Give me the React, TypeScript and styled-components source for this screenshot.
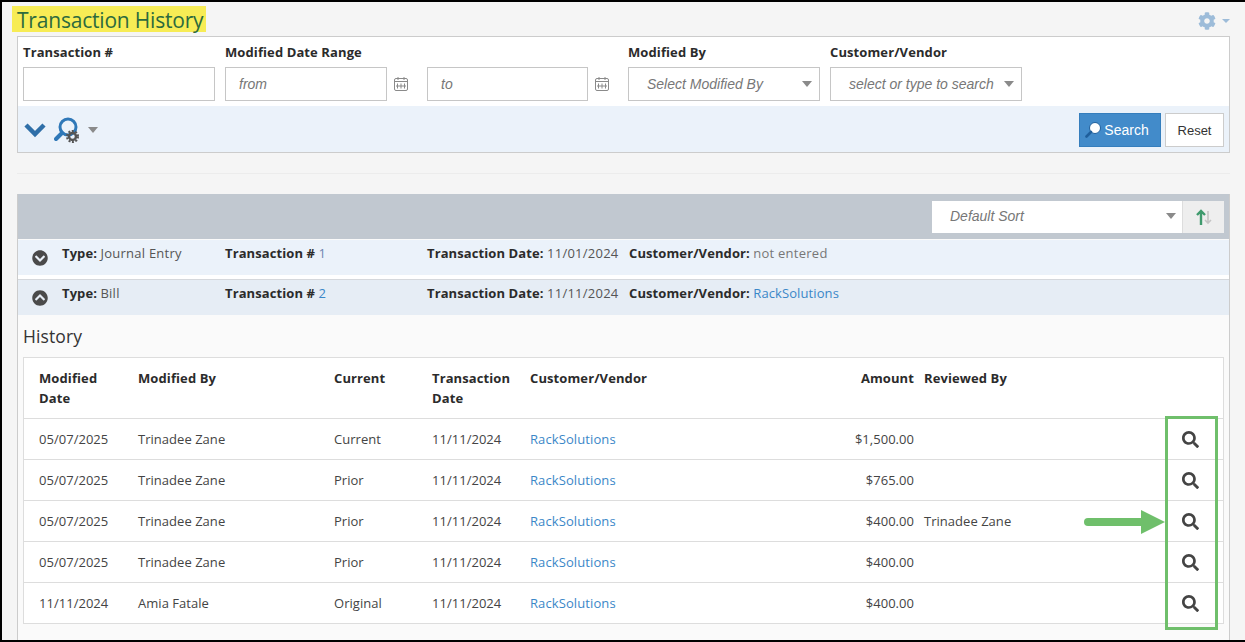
import styled, { createGlobalStyle } from 'styled-components';
import { FaCog, FaSearch, FaChevronCircleDown, FaChevronCircleUp } from 'react-icons/fa';

const Global = createGlobalStyle`
  html, body { margin: 0; padding: 0; background: #f5f5f5; }
  * { box-sizing: border-box; }
  body { font-family: "Open Sans", "Liberation Sans", sans-serif; font-size: 13px; color: #333; }
`;

const Frame = styled.div`
  position: relative;
  width: 1245px;
  height: 642px;
  overflow: hidden;
  background: #f5f5f5;
  border-top: 2px solid #000;
  border-left: 2px solid #000;
  border-bottom: 2px solid #000;
  padding-left: 15px;
`;

const TitleRow = styled.div`
  width: 1213px;
  height: 34px;
  display: flex;
  justify-content: space-between;
  align-items: flex-start;
`;

const Title = styled.h1`
  margin: 4px 0 0 -5px;
  width: 194px;
  height: 26px;
  padding: 0 0 0 5px;
  background: #f7ec55;
  color: #2c6a3e;
  font-size: 21px;
  font-weight: 400;
  line-height: 29px;
  letter-spacing: -0.2px;
  white-space: nowrap;
`;

const Settings = styled.div`
  display: flex;
  align-items: center;
  gap: 6px;
  margin-top: 10px;
  color: #9dbcd9;
  font-size: 18px;
  line-height: 18px;
`;

const Caret = styled.span<{ $w?: number; $color?: string }>`
  display: inline-block;
  width: 0;
  height: 0;
  border-left: ${p => (p.$w ?? 11) / 2}px solid transparent;
  border-right: ${p => (p.$w ?? 11) / 2}px solid transparent;
  border-top: ${p => ((p.$w ?? 11) * 6) / 11}px solid ${p => p.$color ?? '#8a8a8a'};
`;

const Panel = styled.section`
  width: 1213px;
  height: 117px;
  background: #fff;
  border: 1px solid #ccc;
`;

const Fields = styled.div`
  height: 69px;
  display: flex;
  padding-left: 5px;
`;

const Field = styled.div<{ $w: number }>`
  width: ${p => p.$w}px;
  flex: none;
`;

const Label = styled.div`
  height: 30px;
  padding-top: 6px;
  font-size: 13px;
  line-height: 18px;
  font-weight: 700;
  color: #2b2b2b;
  letter-spacing: 0.1px;
  white-space: nowrap;
`;

const DateRow = styled.div`
  display: flex;
  align-items: center;
`;

const Input = styled.div<{ $w: number; $select?: boolean }>`
  width: ${p => p.$w}px;
  height: 34px;
  flex: none;
  display: flex;
  align-items: center;
  justify-content: space-between;
  padding: 0 7px 0 ${p => (p.$select ? 18 : 13)}px;
  background: #fff;
  border: 1px solid #c6c6c6;
  font-family: "Liberation Sans", Arial, sans-serif;
  font-style: italic;
  font-size: 14px;
  color: #777;
  white-space: nowrap;
`;

const CalendarWrap = styled.span`
  display: flex;
  width: 40px;
  padding-left: 6px;
  color: #8a8a8a;
`;

const ActionBar = styled.div`
  height: 46px;
  background: #ebf2fa;
  display: flex;
  justify-content: space-between;
  padding: 7px 5px 0 6px;
`;

const ActionIcons = styled.div`
  display: flex;
  align-items: center;
  height: 34px;
  gap: 8px;
`;

const Buttons = styled.div`
  display: flex;
  gap: 4px;
`;

const SearchButton = styled.button`
  width: 82px;
  height: 34px;
  display: flex;
  align-items: center;
  justify-content: center;
  gap: 3px;
  padding: 0 6px 0 0;
  background: #428bca;
  border: 1px solid #357ebd;
  color: #fff;
  font-family: "Liberation Sans", Arial, sans-serif;
  font-size: 14px;
`;

const ResetButton = styled.button`
  width: 59px;
  height: 34px;
  padding: 0;
  background: #fff;
  border: 1px solid #ccc;
  color: #333;
  font-family: "Liberation Sans", Arial, sans-serif;
  font-size: 13px;
`;

const Rule = styled.hr`
  width: 1213px;
  height: 1px;
  margin: 20px 0;
  border: 0;
  background: #ececec;
`;

const Results = styled.section`
  width: 1213px;
  height: 460px;
  background: #fafafa;
  border-left: 1px solid #ccc;
  border-right: 1px solid #ccc;
`;

const SortBar = styled.div`
  height: 45px;
  background: #c1c8d0;
  display: flex;
  justify-content: flex-end;
  padding: 7px 5px 0 0;
`;

const SortSelect = styled.div`
  width: 250px;
  height: 32px;
  display: flex;
  align-items: center;
  justify-content: space-between;
  padding: 0 6px 2px 18px;
  background: #fff;
  font-family: "Liberation Sans", Arial, sans-serif;
  font-style: italic;
  font-size: 14px;
  color: #777;
`;

const SortToggle = styled.div`
  width: 42px;
  height: 32px;
  display: flex;
  align-items: center;
  justify-content: center;
  background: #eee;
  border-left: 1px solid #ddd;
`;

const TxRow = styled.div<{ $open?: boolean }>`
  height: 35px;
  margin-top: ${p => (p.$open ? 0 : 1)}px;
  display: grid;
  grid-template-columns: 44px 163px 202px 202px 1fr;
  padding-top: 3px;
  background: ${p => (p.$open ? '#e6edf5' : '#ebf2fa')};
  line-height: 20px;
  white-space: nowrap;
`;

const TxDivider = styled.div`
  height: 5px;
  border-bottom: 1px solid #d5d8dc;
  background: #fff;
`;

const TxToggle = styled.span`
  display: flex;
  padding: 7px 0 0 14px;
  color: #4a4a4a;
  font-size: 16px;
`;

const TxLabel = styled.b`
  font-weight: 700;
  color: #2b2b2b;
  letter-spacing: 0.1px;
`;

const Muted = styled.span<{ $tone?: string }>`
  color: ${p => p.$tone ?? '#555'};
  letter-spacing: 0.25px;
`;

const Link = styled.a`
  color: #3b87c8;
  text-decoration: none;
  letter-spacing: 0.1px;
`;

const Heading = styled.h2`
  margin: 0;
  height: 42px;
  padding: 11px 0 0 5px;
  font-size: 17.5px;
  font-weight: 400;
  line-height: 20px;
  color: #333;
  letter-spacing: 0.1px;
`;

const TableBox = styled.div`
  width: 1201px;
  margin-left: 5px;
  background: #fff;
  border: 1px solid #ddd;
`;

const HistoryTable = styled.table`
  width: 100%;
  border-collapse: collapse;
  table-layout: fixed;
`;

const Th = styled.th<{ $right?: boolean; $flush?: boolean }>`
  height: 60px;
  vertical-align: top;
  padding: 10px ${p => (p.$right ? 10 : 0)}px 0 ${p => (p.$flush ? 0 : 15)}px;
  text-align: ${p => (p.$right ? 'right' : 'left')};
  font-weight: 700;
  line-height: 20px;
  color: #2b2b2b;
  letter-spacing: 0.1px;
`;

const Td = styled.td<{ $right?: boolean; $flush?: boolean }>`
  height: 41px;
  padding: 0 ${p => (p.$right ? 10 : 0)}px 0 ${p => (p.$flush ? 0 : 15)}px;
  border-top: 1px solid #ddd;
  text-align: ${p => (p.$right ? 'right' : 'left')};
  color: #444;
  letter-spacing: 0.03px;
  white-space: nowrap;
`;

const ViewCell = styled.td`
  height: 41px;
  padding: 5px 0 0 32px;
  border-top: 1px solid #ddd;
  color: #444;
  font-size: 17px;
`;

const Callout = styled.div`
  position: absolute;
  left: 1163px;
  top: 414px;
  width: 53px;
  height: 214px;
  border: 3px solid #6fbf6b;
`;

const Arrow = styled.svg`
  position: absolute;
  left: 1082px;
  top: 507px;
`;

const Calendar = () => (
  <CalendarWrap>
    <svg width="16" height="16" viewBox="0 0 16 16" fill="none" stroke="currentColor">
      <rect x="1.5" y="2.5" width="13" height="12" rx="1.5" />
      <path d="M1.5 5.5h13M5 1v3M11 1v3M4.5 7.5v5M8 7.5v5M11.5 7.5v5M3 10h10" />
    </svg>
  </CalendarWrap>
);

const ChevronIcon = () => (
  <svg width="22" height="16" viewBox="0 0 22 16" fill="none" stroke="#2f6fa8" strokeWidth="4.5">
    <path d="M2 3l9 9 9-9" />
  </svg>
);

const AdvancedSearchIcon = () => (
  <svg width="26" height="26" viewBox="0 0 26 26" fill="none">
    <circle cx="14" cy="10" r="8" stroke="#2f78b8" strokeWidth="3" />
    <path d="M8 16l-6 6" stroke="#2f78b8" strokeWidth="4" strokeLinecap="round" />
    <circle cx="18.5" cy="19.5" r="3.5" stroke="#555" strokeWidth="2.5" />
    <circle cx="18.5" cy="19.5" r="5.5" stroke="#555" strokeWidth="2" strokeDasharray="2 1.5" />
  </svg>
);

const ButtonLens = () => (
  <svg width="16" height="16" viewBox="0 0 16 16">
    <circle cx="10" cy="6" r="5.5" fill="#fff" stroke="#1f5f9c" strokeWidth="1" />
    <path d="M6 10l-4.5 4.5" stroke="#1f5f9c" strokeWidth="2.6" strokeLinecap="round" />
  </svg>
);

const SortArrows = () => (
  <svg width="18" height="18" viewBox="0 0 18 18" fill="none" strokeWidth="2">
    <path d="M6 17V3M2 7l4-4 4 4" stroke="#3f9a6d" strokeWidth="2.4" />
    <path d="M13 3v12M10 12l3 3 3-3" stroke="#c4c4c4" strokeWidth="1.6" />
  </svg>
);

const rows = [
  { date: '05/07/2025', by: 'Trinadee Zane', current: 'Current', amount: '$1,500.00', reviewed: '' },
  { date: '05/07/2025', by: 'Trinadee Zane', current: 'Prior', amount: '$765.00', reviewed: '' },
  { date: '05/07/2025', by: 'Trinadee Zane', current: 'Prior', amount: '$400.00', reviewed: 'Trinadee Zane' },
  { date: '05/07/2025', by: 'Trinadee Zane', current: 'Prior', amount: '$400.00', reviewed: '' },
  { date: '11/11/2024', by: 'Amia Fatale', current: 'Original', amount: '$400.00', reviewed: '' },
];

export default function App() {
  return (
    <Frame>
      <Global />
      <TitleRow>
        <Title>Transaction History</Title>
        <Settings>
          <FaCog />
          <Caret $w={8} $color="#9dbcd9" />
        </Settings>
      </TitleRow>

      <Panel>
        <Fields>
          <Field $w={202}>
            <Label>Transaction #</Label>
            <Input $w={192} />
          </Field>
          <Field $w={202}>
            <Label>Modified Date Range</Label>
            <DateRow>
              <Input $w={162}>from</Input>
              <Calendar />
            </DateRow>
          </Field>
          <Field $w={201}>
            <Label>&nbsp;</Label>
            <DateRow>
              <Input $w={161}>to</Input>
              <Calendar />
            </DateRow>
          </Field>
          <Field $w={202}>
            <Label>Modified By</Label>
            <Input $w={192} $select>
              Select Modified By
              <Caret />
            </Input>
          </Field>
          <Field $w={192}>
            <Label>Customer/Vendor</Label>
            <Input $w={192} $select>
              select or type to search
              <Caret />
            </Input>
          </Field>
        </Fields>
        <ActionBar>
          <ActionIcons>
            <ChevronIcon />
            <AdvancedSearchIcon />
            <Caret />
          </ActionIcons>
          <Buttons>
            <SearchButton>
              <ButtonLens />
              Search
            </SearchButton>
            <ResetButton>Reset</ResetButton>
          </Buttons>
        </ActionBar>
      </Panel>

      <Rule />

      <Results>
        <SortBar>
          <SortSelect>
            Default Sort
            <Caret />
          </SortSelect>
          <SortToggle>
            <SortArrows />
          </SortToggle>
        </SortBar>

        <TxRow>
          <TxToggle><FaChevronCircleDown /></TxToggle>
          <span><TxLabel>Type:</TxLabel> <Muted>Journal Entry</Muted></span>
          <span><TxLabel>Transaction #</TxLabel> <Muted $tone="#6f86b0">1</Muted></span>
          <span><TxLabel>Transaction Date:</TxLabel> <Muted>11/01/2024</Muted></span>
          <span><TxLabel>Customer/Vendor:</TxLabel> <Muted $tone="#777">not entered</Muted></span>
        </TxRow>
        <TxDivider />
        <TxRow $open>
          <TxToggle><FaChevronCircleUp /></TxToggle>
          <span><TxLabel>Type:</TxLabel> <Muted>Bill</Muted></span>
          <span><TxLabel>Transaction #</TxLabel> <Link href="#">2</Link></span>
          <span><TxLabel>Transaction Date:</TxLabel> <Muted>11/11/2024</Muted></span>
          <span><TxLabel>Customer/Vendor:</TxLabel> <Link href="#">RackSolutions</Link></span>
        </TxRow>

        <Heading>History</Heading>

        <TableBox>
          <HistoryTable>
            <colgroup>
              <col width="99" />
              <col width="196" />
              <col width="98" />
              <col width="98" />
              <col width="300" />
              <col width="109" />
              <col width="226" />
              <col />
            </colgroup>
            <thead>
              <tr>
                <Th>Modified Date</Th>
                <Th>Modified By</Th>
                <Th>Current</Th>
                <Th>Transaction Date</Th>
                <Th>Customer/Vendor</Th>
                <Th $right>Amount</Th>
                <Th $flush>Reviewed By</Th>
                <Th />
              </tr>
            </thead>
            <tbody>
              {rows.map((r, i) => (
                <tr key={i}>
                  <Td>{r.date}</Td>
                  <Td>{r.by}</Td>
                  <Td>{r.current}</Td>
                  <Td>11/11/2024</Td>
                  <Td><Link href="#">RackSolutions</Link></Td>
                  <Td $right>{r.amount}</Td>
                  <Td $flush>{r.reviewed}</Td>
                  <ViewCell><FaSearch /></ViewCell>
                </tr>
              ))}
            </tbody>
          </HistoryTable>
        </TableBox>
      </Results>

      <Callout />
      <Arrow width="82" height="26" viewBox="0 0 82 26">
        <path d="M4 13H58" stroke="#6fbf6b" strokeWidth="8" strokeLinecap="round" />
        <path d="M57 1l24 12-24 12z" fill="#6fbf6b" />
      </Arrow>
    </Frame>
  );
}
